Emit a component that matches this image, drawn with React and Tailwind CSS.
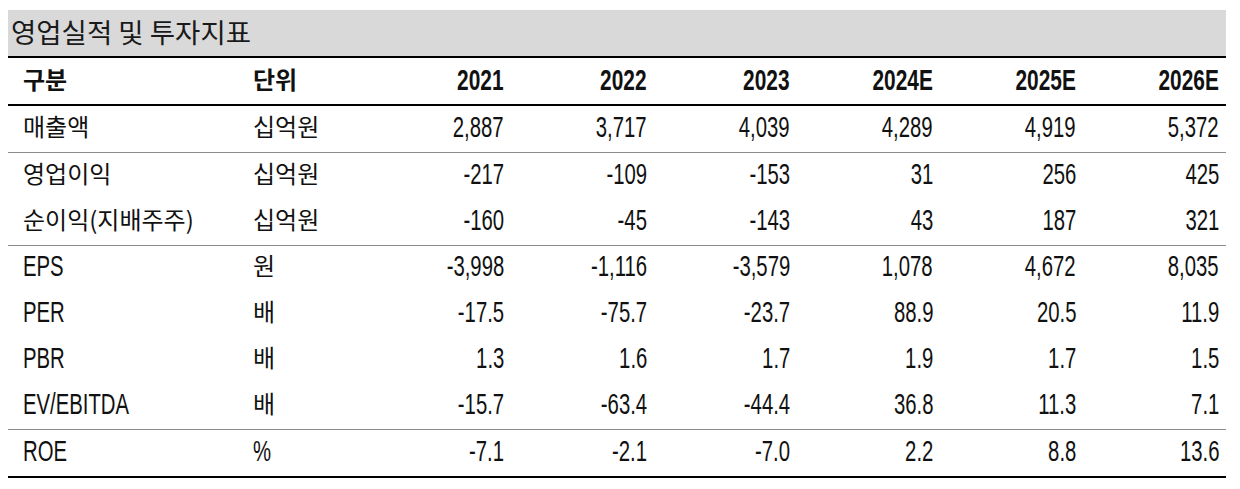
import React from 'react'

const years = ['2021', '2022', '2023', '2024E', '2025E', '2026E']

const groups = [
  [
    ['매출액', '십억원', ['2,887', '3,717', '4,039', '4,289', '4,919', '5,372']],
  ],
  [
    ['영업이익', '십억원', ['-217', '-109', '-153', '31', '256', '425']],
    ['순이익(지배주주)', '십억원', ['-160', '-45', '-143', '43', '187', '321']],
  ],
  [
    ['EPS', '원', ['-3,998', '-1,116', '-3,579', '1,078', '4,672', '8,035']],
    ['PER', '배', ['-17.5', '-75.7', '-23.7', '88.9', '20.5', '11.9']],
    ['PBR', '배', ['1.3', '1.6', '1.7', '1.9', '1.7', '1.5']],
    ['EV/EBITDA', '배', ['-15.7', '-63.4', '-44.4', '36.8', '11.3', '7.1']],
  ],
  [
    ['ROE', '%', ['-7.1', '-2.1', '-7.0', '2.2', '8.8', '13.6']],
  ],
]

const hasKorean = (s) => /[\uac00-\ud7a3]/.test(s)

// Latin text in the source is a very narrow face, so squeeze Liberation Sans
function Latin({ children, bold, right }) {
  return (
    <span
      className={`inline-block whitespace-nowrap font-['Liberation_Sans',sans-serif] text-[29px] leading-none scale-x-[0.7] ${bold ? 'font-bold scale-x-[0.72]' : ''} ${right ? 'origin-right' : 'origin-left'}`}
    >
      {children}
    </span>
  )
}

function Korean({ children, bold }) {
  return (
    <span className={`whitespace-nowrap font-['Noto_Sans_CJK_KR',sans-serif] text-[24px] leading-none ${bold ? 'font-bold' : ''}`}>
      {children}
    </span>
  )
}

function Text({ children, bold, right }) {
  return hasKorean(children)
    ? <Korean bold={bold}>{children}</Korean>
    : <Latin bold={bold} right={right}>{children}</Latin>
}

const cols = 'grid grid-cols-[238px_122px_repeat(6,143px)]'

function Row({ label, unit, values, h = 'h-[46px]' }) {
  return (
    <div className={`${cols} ${h} items-center pb-[3px]`}>
      <div className="pl-[15px]"><Text>{label}</Text></div>
      <div className="pl-[7px]"><Text>{unit}</Text></div>
      {values.map((v, i) => (
        <div key={i} className="pr-[7px] text-right"><Text right>{v}</Text></div>
      ))}
    </div>
  )
}

export default function App() {
  return (
    <div className="min-h-[489px] bg-white pl-[8px] pt-[10px] text-[#111]">
      <div className="w-[1218px]">
        <div className="flex h-[46px] items-center bg-[#d9d9d9] pb-[3px] pl-[3px]">
          <span className="font-['Noto_Sans_CJK_KR',sans-serif] text-[27.5px] leading-none text-[#1a1a1a]">영업실적 및 투자지표</span>
        </div>
        <div className="border-t-2 border-black">
          <div className={`${cols} h-[46px] items-center`}>
            <div className="pl-[15px]"><Korean bold>구분</Korean></div>
            <div className="pl-[7px]"><Korean bold>단위</Korean></div>
            {years.map((y) => (
              <div key={y} className="pr-[7px] text-right"><Latin bold right>{y}</Latin></div>
            ))}
          </div>
        </div>
        <div className="border-t-2 border-black">
          {groups.map((g, gi) => (
            <div key={gi} className={gi > 0 ? 'border-t border-[#8c8c8c]' : ''}>
              {g.map(([label, unit, values]) => (
                <Row key={label} label={label} unit={unit} values={values} h={gi === 2 ? 'h-[45.75px]' : 'h-[46px]'} />
              ))}
            </div>
          ))}
        </div>
        <div className="border-t-2 border-black" />
      </div>
    </div>
  )
}
